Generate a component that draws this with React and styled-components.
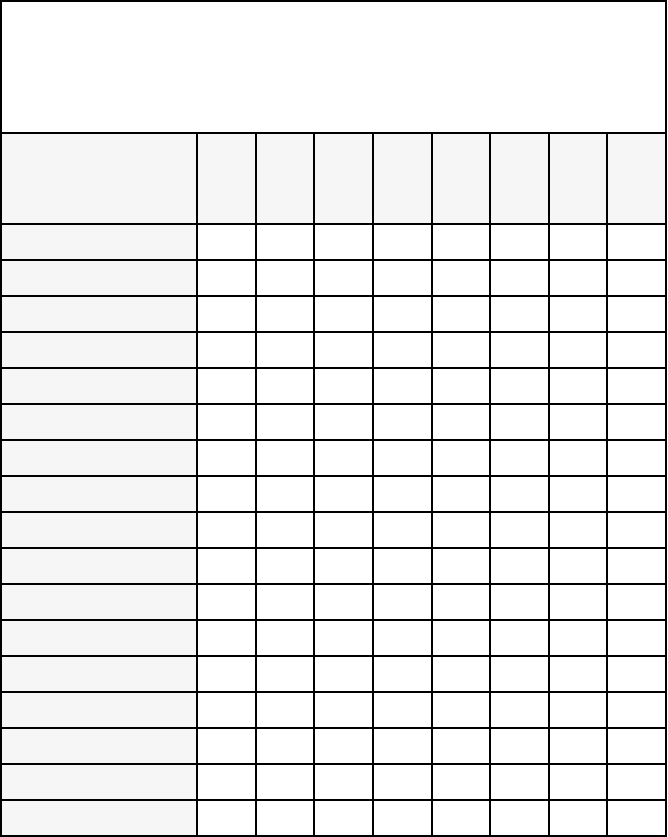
import styled, { createGlobalStyle } from "styled-components";

const GlobalStyle = createGlobalStyle`
    html, body {
        margin: 0;
        padding: 0;
        background: #fff;
        font-family: "Liberation Sans", Arial, sans-serif;
    }
`

// the black background shows through the gaps as the grid lines
const StyledGrid = styled.div`
    box-sizing: border-box;
    display: grid;
    grid-template-columns: 194px repeat(8, 1fr);
    grid-template-rows: 130px 89px repeat(17, 34px);
    gap: 2px;
    width: 667px;
    border: 2px solid #000;
    background: #000;
`
const TitleCell = styled.div`
    grid-column: 1 / -1;
    background: #fff;
`
const HeadCell = styled.div`
    background: #f6f6f6;
`
const Cell = styled.div`
    background: ${props => props.$label ? "#f6f6f6" : "#fff"};
`

const columns = 8;
const rows = 17;

function App() {
    return (
        <>
            <GlobalStyle />
            <StyledGrid>
                <TitleCell />
                <HeadCell />
                {Array.from({ length: columns }).map((_, i) => <HeadCell key={i} />)}
                {Array.from({ length: rows }).map((_, r) => (
                    <>
                        <Cell key={`l${r}`} $label />
                        {Array.from({ length: columns }).map((_, c) => <Cell key={`${r}-${c}`} />)}
                    </>
                ))}
            </StyledGrid>
        </>
    )
}

export default App;
